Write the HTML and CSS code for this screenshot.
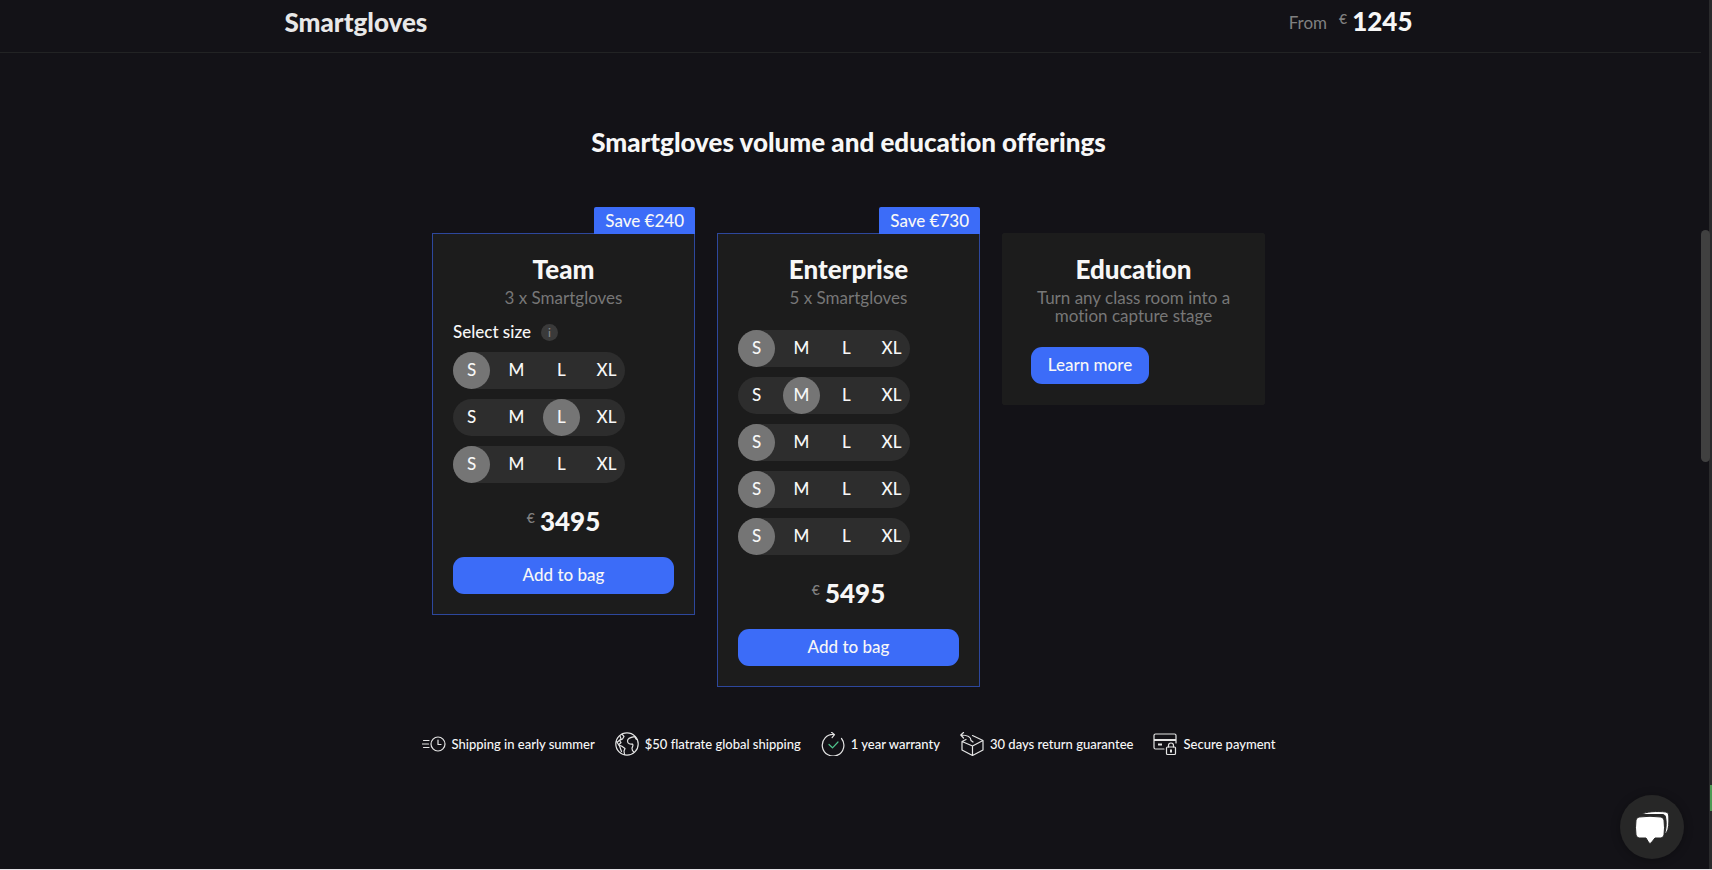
FILE: index.html
```html
<!DOCTYPE html>
<html lang="en">
<head>
    <meta charset="UTF-8">
    <meta name="viewport" content="width=device-width, initial-scale=1.0">
    <title>Smartgloves</title>
    <link rel="stylesheet" href="styles.css">
</head>
<body>
    <header class="header">
        <div class="header-inner">
            <h1 class="product-name">Smartgloves</h1>
            <p class="header-price"><span class="from">From</span><span class="euro">€</span><strong class="amount">1245</strong></p>
        </div>
    </header>

    <main class="main">
        <h2 class="title">Smartgloves volume and education offerings</h2>

        <div class="offers">
            <section class="card card-offer">
                <span class="save">Save €240</span>
                <h3 class="card-title">Team</h3>
                <p class="card-text">3 x Smartgloves</p>
                <p class="select-size">Select size <button type="button" class="info" aria-label="Size info">i</button></p>
                <div class="sizes" data-name="team" data-selected="S L S"></div>
                <p class="price"><span class="euro">€</span><strong class="amount">3495</strong></p>
                <button type="button" class="btn btn-wide">Add to bag</button>
            </section>

            <section class="card card-offer">
                <span class="save">Save €730</span>
                <h3 class="card-title">Enterprise</h3>
                <p class="card-text">5 x Smartgloves</p>
                <div class="sizes sizes-spaced" data-name="enterprise" data-selected="S M S S S"></div>
                <p class="price"><span class="euro">€</span><strong class="amount">5495</strong></p>
                <button type="button" class="btn btn-wide">Add to bag</button>
            </section>

            <section class="card">
                <h3 class="card-title">Education</h3>
                <p class="card-text">Turn any class room into a motion capture stage</p>
                <a href="#" class="btn btn-more">Learn more</a>
            </section>
        </div>

        <ul class="features">
            <li class="feature">
                <svg class="icon" viewBox="0 0 24 24">
                    <circle cx="16" cy="12" r="7"/>
                    <path d="M16 8v4.500h3M1.500 8.500h5.500M0 12h6.500M1.500 15.500h5.500"/>
                </svg>
                Shipping in early summer
            </li>
            <li class="feature">
                <svg class="icon" viewBox="0 0 24 24">
                    <circle cx="12" cy="12" r="11.200"/>
                    <path d="M7 2.200l2 2.300-1.500 2.500-3 1.500 1.500 2-2.500 2.500 3 1 3.500 2.500-1 2.500.5 3.500M1.500 9.500l3 4.500 2 5.500M5 4l1 3-3.500 3M20 4.500c-3 .5-7.500 1-7.500 4.500 0 3 3 3.500 5 3 1.500 1.500-.5 3-.5 4.500 0 1.500 1 3 2 3.500M20 5c.5 2 1.500 2.500 2.500 3"/>
                </svg>
                $50 flatrate global shipping
            </li>
            <li class="feature">
                <svg class="icon" viewBox="0 0 24 24">
                    <path d="M20.500 6.500A10.800 10.800 0 1 1 13 2.500M10.500.2l3 2.400-2.400 3"/>
                    <path class="check" d="M8 12.500l3.500 3.300L17 10"/>
                </svg>
                1 year warranty
            </li>
            <li class="feature">
                <svg class="icon" viewBox="0 0 24 24">
                    <path d="M2 9.500v8.500l10.500 5.500L23 18V8.500l-10.500 5.500L2 9.500l4-2M12.500 14v9.500M23 8.500L12.500 3.500M11 8.500C11 5 7 3 .8 3M3.500.5L.8 3l2.700 3M11 8.500l2 1.500"/>
                </svg>
                30 days return guarantee
            </li>
            <li class="feature">
                <svg class="icon" viewBox="0 0 24 24">
                    <path d="M11 17H2.500A1.500 1.500 0 0 1 1 15.500V3.500A1.500 1.500 0 0 1 2.500 2H21.500A1.500 1.500 0 0 1 23 3.500V11"/>
                    <path class="thick" d="M1 8h22M5 12.500h4"/>
                    <rect x="13.500" y="15" width="9" height="7.500" rx="1"/>
                    <path d="M15.500 15v-1.500a2.500 2.500 0 0 1 5 0V15"/>
                    <path class="thick" d="M18 17.500v3"/>
                </svg>
                Secure payment
            </li>
        </ul>
    </main>

    <button type="button" class="chat" aria-label="Open chat">
        <svg class="chat-icon" viewBox="0 0 34 34">
            <path d="M7 4.500C10 1.500 22 1 31 2q3 .5 2.800 4C34 13 34 19 31.500 22.500q-1 1-1.500 0C31.500 17 31.500 12 30.500 7 30 5 29 4.500 27 4.500z"/>
            <path d="M4 7q11-1.500 22 0 2.500.5 3 3 1 8 0 15-.5 2.500-3 3h-6l-4 5q-1 1-2 0L11 28H4q-2.500-.5-3-3-1-7 0-15 .5-2.500 3-3z"/>
        </svg>
    </button>

    <div class="scroll-track"><div class="scroll-thumb"></div></div>
    <div class="side-tab"></div>

    <script>
        const sizes = ['S', 'M', 'L', 'XL'];

        // One row of size radios per pair of gloves
        document.querySelectorAll('.sizes').forEach(box => {
            box.dataset.selected.split(' ').forEach((selected, row) => {
                const picker = document.createElement('div');
                picker.className = 'picker';
                picker.setAttribute('role', 'radiogroup');
                picker.setAttribute('aria-label', `Size of pair ${row + 1}`);
                picker.innerHTML = sizes.map(size => `
                    <label class="size">
                        <input type="radio" class="size-input" name="${box.dataset.name}-${row}" value="${size}" ${size === selected ? 'checked' : ''}>
                        <span class="size-label">${size}</span>
                    </label>`).join('');
                box.appendChild(picker);
            });
        });
    </script>
</body>
</html>
```

FILE: styles.css
```css
* {
    margin: 0;
    padding: 0;
    box-sizing: border-box;
}

body {
    min-height: 100vh;
    padding-right: 11px;
    overflow: hidden;
    background: #131217;
    border-bottom: 1px solid #e6e4e8;
    color: #f7f7f7;
    font-family: Lato, "Liberation Sans", sans-serif;
    font-size: 17px;
    font-weight: 500;
    font-variant-ligatures: none;
    line-height: 18px;
}

button {
    border: none;
    font: inherit;
    cursor: pointer;
}

.header {
    padding: 0 24px 0 20px;
    border-bottom: 1px solid #222324;
}

.header-inner {
    display: flex;
    justify-content: space-between;
    max-width: 1128px;
    height: 52px;
    margin: 0 auto;
    padding-top: 7px;
}

.product-name,
.title,
.card-title,
.amount {
    font-size: 26px;
    font-weight: 900;
    line-height: 30px;
}

.product-name {
    color: #e8e8e8;
}

.header-price {
    display: flex;
    align-items: flex-start;
}

.header-price .amount {
    line-height: 28px;
}

.from {
    margin-right: 12px;
    color: #808080;
    font-weight: 400;
    line-height: 32px;
}

.euro {
    margin-right: 5px;
    color: #808080;
    font-size: 14px;
    line-height: 24px;
}

.main {
    padding: 74px 24px 111px 20px;
}

.title {
    text-align: center;
}

.offers {
    display: grid;
    grid-template-columns: repeat(3, 263px);
    justify-content: center;
    align-items: start;
    gap: 22px;
    margin-top: 76px;
}

.card {
    position: relative;
    padding: 20px;
    background: #1c1c1c;
    border: 1px solid #1c1c1c;
    border-radius: 2px;
}

.card-offer {
    border-color: #2d479c;
    border-radius: 0;
}

.save {
    position: absolute;
    right: -1px;
    bottom: 100%;
    padding: 5px 11px 4px;
    background: #3c6cf8;
    border-radius: 2px 2px 0 0;
}

.card-title {
    text-align: center;
}

.card-text {
    margin-top: 5px;
    padding: 0 10px;
    color: #777;
    font-weight: 400;
    text-align: center;
}

.select-size {
    display: flex;
    align-items: center;
    gap: 10px;
    margin-top: 16px;
    margin-bottom: 11px;
}

.info {
    width: 17px;
    height: 17px;
    border-radius: 50%;
    background: #3a3a3a;
    color: #888;
    font-size: 12px;
    line-height: 17px;
}

.sizes {
    display: flex;
    flex-direction: column;
    align-items: flex-start;
    gap: 10px;
}

.sizes-spaced {
    margin-top: 23px;
}

.picker {
    display: flex;
    gap: 8px;
    border-radius: 19px;
    background: #2d2d2d;
}

.size {
    position: relative;
    cursor: pointer;
}

.size-input {
    position: absolute;
    inset: 0;
    opacity: 0;
}

.size-label {
    display: block;
    width: 37px;
    height: 37px;
    border-radius: 50%;
    line-height: 35px;
    text-align: center;
}

.size-input:checked + .size-label {
    background: #757575;
}

.price {
    display: flex;
    justify-content: center;
    margin: 23px 0 21px;
}

.btn {
    display: block;
    height: 37px;
    border-radius: 11px;
    background: #3c6cf8;
    color: #f7f7f7;
    line-height: 35px;
    text-align: center;
    text-decoration: none;
}

.btn-wide {
    width: 100%;
    padding-bottom: 2px;
}

.btn-more {
    width: 118px;
    margin: 22px 0 0 8px;
}

.features {
    display: flex;
    flex-wrap: wrap;
    justify-content: center;
    gap: 20px;
    margin-top: 45px;
    list-style: none;
    font-size: 13px;
}

.feature {
    display: flex;
    align-items: center;
    gap: 6px;
}

.icon {
    width: 24px;
    height: 24px;
    fill: none;
    stroke: #e4e4e4;
    stroke-width: 1.2;
    stroke-linecap: round;
    stroke-linejoin: round;
}

.icon .check {
    stroke: #4fc48c;
}

.icon .thick {
    stroke-width: 2;
    stroke-linecap: butt;
}

.chat {
    position: fixed;
    right: 28px;
    bottom: 11px;
    display: flex;
    align-items: center;
    justify-content: center;
    width: 64px;
    height: 64px;
    border-radius: 50%;
    background: #272727;
    box-shadow: 0 1px 10px rgba(0, 0, 0, 0.3);
}

.chat-icon {
    width: 34px;
    height: 34px;
    fill: #fff;
    stroke: #272727;
    stroke-width: 1;
}

.scroll-track {
    position: fixed;
    top: 0;
    right: 0;
    bottom: 1px;
    width: 11px;
    border-right: 3px solid #2a2a2c;
}

.scroll-thumb {
    position: absolute;
    top: 230px;
    right: -1px;
    width: 9px;
    height: 232px;
    border-radius: 5px;
    background: #404040;
}

.side-tab {
    position: fixed;
    right: 0;
    bottom: 59px;
    width: 2px;
    height: 26px;
    background: #4c9a54;
}
```
